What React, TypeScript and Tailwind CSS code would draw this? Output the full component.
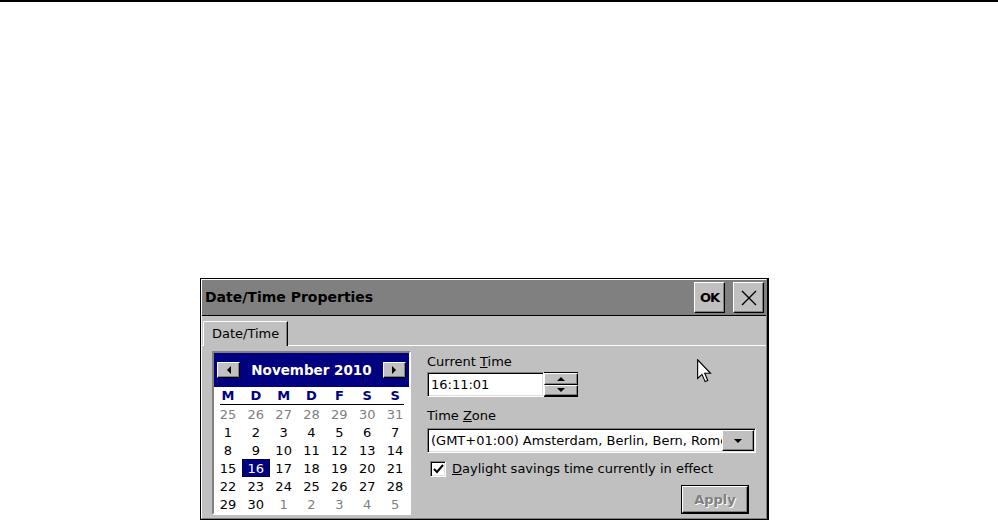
import React from "react";

const raised =
  "bg-[#c0c0c0] border border-t-white border-l-white border-r-black border-b-black shadow-[inset_-1px_-1px_0_#808080]";
const sunken =
  "bg-white border border-t-[#808080] border-l-[#808080] border-r-white border-b-white shadow-[inset_1px_1px_0_#000,inset_-1px_-1px_0_#dfdfdf]";

const days: { d: number; muted: boolean }[] = [
  ...[25, 26, 27, 28, 29, 30, 31].map((d) => ({ d, muted: true })),
  ...Array.from({ length: 30 }, (_, i) => ({ d: i + 1, muted: false })),
  ...[1, 2, 3, 4, 5].map((d) => ({ d, muted: true })),
];

function Tri({ dir }: { dir: "left" | "right" | "up" | "down" }) {
  const pts = {
    left: "4,0 4,8 0,4",
    right: "0,0 0,8 4,4",
    up: "0,4 8,4 4,0",
    down: "0,0 8,0 4,4",
  }[dir];
  const horiz = dir === "left" || dir === "right";
  return (
    <svg width={horiz ? 4 : 8} height={horiz ? 8 : 4} viewBox={horiz ? "0 0 4 8" : "0 0 8 4"}>
      <polygon points={pts} fill="black" />
    </svg>
  );
}

function Calendar() {
  return (
    <div className="w-[199px] h-[164px] border-2 border-t-[#808080] border-l-[#808080] border-r-white border-b-white bg-white flex flex-col">
      {/* Month header */}
      <div className="h-[34px] bg-[#000080] flex items-center justify-between px-[3px]">
        <div className={`w-[23px] h-[16px] flex items-center justify-center ${raised}`}>
          <Tri dir="left" />
        </div>
        <span className="text-white font-bold text-[13.5px]">November 2010</span>
        <div className={`w-[23px] h-[16px] flex items-center justify-center ${raised}`}>
          <Tri dir="right" />
        </div>
      </div>

      {/* Weekday header */}
      <div className="grid grid-cols-7 h-[17px] items-center text-[#000080] font-bold text-[13px] leading-none">
        {["M", "D", "M", "D", "F", "S", "S"].map((w, i) => (
          <span key={i} className="text-center">
            {w}
          </span>
        ))}
      </div>
      <div className="h-px bg-black ml-[6px] mr-[5px]" />

      {/* Days */}
      <div className="grid grid-cols-7 text-[13px] leading-none">
        {days.map((x, i) =>
          !x.muted && x.d === 16 ? (
            <span
              key={i}
              className="h-[18px] flex items-center justify-center bg-[#000080] text-white border border-dotted border-black"
            >
              {x.d}
            </span>
          ) : (
            <span
              key={i}
              className={`h-[18px] flex items-center justify-center ${x.muted ? "text-[#808080]" : "text-black"}`}
            >
              {x.d}
            </span>
          )
        )}
      </div>
    </div>
  );
}

export default function App() {
  return (
    <div className="relative w-[998px] h-[523px] overflow-hidden bg-white font-['DejaVu_Sans',sans-serif] text-black">
      <div className="h-[2px] bg-black" />

      {/* Dialog */}
      <div className="ml-[200px] mt-[276px] w-[569px] border border-black border-r-2">
        <div className="border border-t-white border-l-white border-r-[#808080] border-b-[#808080] bg-[#c0c0c0]">
          {/* Title bar */}
          <div className="h-[36px] bg-[#808080] border-b border-black flex items-center justify-between pl-[3px] pr-[2px]">
            <span className="font-bold text-[14px]">Date/Time Properties</span>
            <div className="flex gap-[8px]">
              <div className={`w-[31px] h-[31px] flex items-center justify-center ${raised}`}>
                <span className="font-bold text-[13px] tracking-[-1px]">OK</span>
              </div>
              <div className={`w-[31px] h-[31px] flex items-center justify-center ${raised}`}>
                <svg width="16" height="16" viewBox="0 0 16 16">
                  <path d="M1 1 L15 15 M15 1 L1 15" stroke="black" strokeWidth="1.4" />
                </svg>
              </div>
            </div>
          </div>

          {/* Tab strip */}
          <div className="flex pt-[5px]">
            <div className="w-[1px] border-b border-white" />
            <div className="h-[25px] px-[8px] flex items-center border-t border-l border-white border-r border-r-black rounded-tl-[2px] shadow-[inset_-1px_0_0_#808080] text-[13px]">
              Date/Time
            </div>
            <div className="flex-1 border-b border-white" />
          </div>

          {/* Tab panel */}
          <div className="flex pl-[10px] pt-[5px] pb-[3px]">
            <Calendar />

            <div className="ml-[16px] w-[330px] flex flex-col text-[13px]">
              <span className="mt-[3px] leading-[16px]">
                Current <span className="underline">T</span>ime
              </span>
              <div className="mt-[2px] w-[151px] h-[25px] flex">
                <div className={`flex-1 flex items-center pl-[3px] ${sunken}`}>16:11:01</div>
                <div className="w-[34px] flex flex-col bg-[#c0c0c0] border-y border-y-black">
                  <div className={`flex-1 flex items-center justify-center ${raised}`}>
                    <Tri dir="up" />
                  </div>
                  <div className={`flex-1 flex items-center justify-center ${raised}`}>
                    <Tri dir="down" />
                  </div>
                </div>
              </div>

              <span className="mt-[11px] leading-[16px]">
                Time <span className="underline">Z</span>one
              </span>
              <div className={`mt-[4px] w-[329px] h-[25px] flex items-center ${sunken}`}>
                <span className="flex-1 min-w-0 pl-[3px] whitespace-nowrap overflow-hidden">
                  (GMT+01:00) Amsterdam, Berlin, Bern, Rome, Stockholm, Vienna
                </span>
                <div className={`w-[32px] h-[21px] mr-[1px] flex items-center justify-center ${raised}`}>
                  <Tri dir="down" />
                </div>
              </div>

              <div className="mt-[8px] h-[16px] flex items-center pl-[3px]">
                <div className={`w-[16px] h-[16px] flex items-center justify-center ${sunken}`}>
                  <svg width="11" height="10" viewBox="0 0 11 10">
                    <path d="M1 5 L4 8 L10 1" stroke="black" strokeWidth="2" fill="none" />
                  </svg>
                </div>
                <span className="ml-[6px] leading-[16px]">
                  <span className="underline">D</span>aylight savings time currently in effect
                </span>
              </div>

              <div className="mt-[8px] self-end mr-[8px] w-[68px] h-[29px] border border-black">
                <div className={`w-full h-full flex items-center justify-center ${raised}`}>
                  <span className="font-bold text-[#808080] [text-shadow:1px_1px_0_#fff]">Apply</span>
                </div>
              </div>
            </div>
          </div>
        </div>
      </div>

      {/* Mouse pointer */}
      <svg
        className="absolute left-[697px] top-[359px]"
        width="15"
        height="24"
        viewBox="0 0 12 19"
      >
        <path
          d="M0.5 0.5 L0.5 15.5 L4 12.2 L6.5 18 L8.6 17.1 L6.2 11.3 L10.8 11.3 Z"
          fill="white"
          stroke="black"
          strokeWidth="0.9"
        />
      </svg>
    </div>
  );
}
